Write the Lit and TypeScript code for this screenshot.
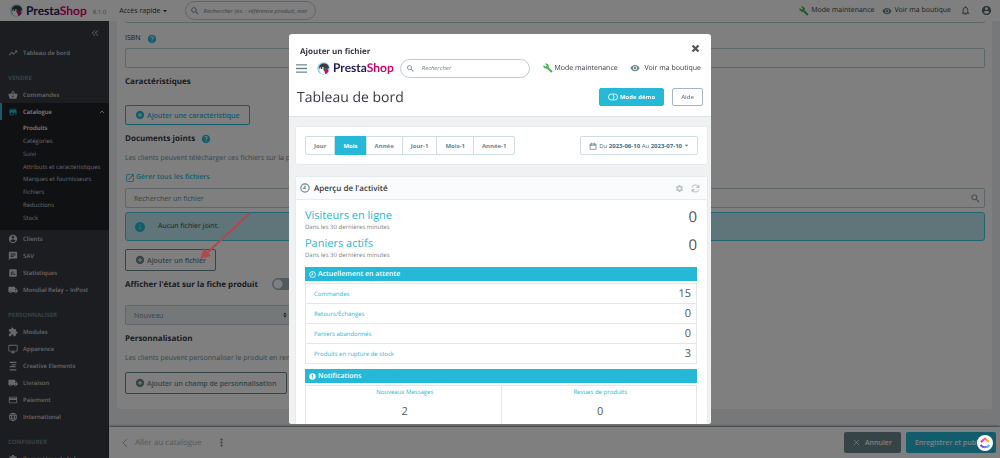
import { LitElement, html, css, svg } from "lit";
import { customElement, property } from "lit/decorators.js";

const PATHS: Record<string, string> = {
  trend: "M16 6l2.29 2.29-4.88 4.88-4-4L2 16.59 3.41 18l6-6 4 4 6.3-6.29L22 12V6z",
  basket:
    "M17.21 9l-4.38-6.56c-.19-.28-.51-.42-.83-.42-.32 0-.64.14-.83.43L6.79 9H2c-.55 0-1 .45-1 1 0 .09.01.18.04.27l2.54 9.27c.23.84 1 1.46 1.92 1.46h13c.92 0 1.69-.62 1.93-1.46l2.54-9.27L23 10c0-.55-.45-1-1-1h-4.79zM9 9l3-4.4L15 9H9zm3 8c-1.1 0-2-.9-2-2s.9-2 2-2 2 .9 2 2-.9 2-2 2z",
  store: "M20 4H4v2h16V4zm1 10v-2l-1-5H4l-1 5v2h1v6h10v-6h4v6h2v-6h1zm-9 4H6v-4h6v4z",
  account:
    "M12 2C6.48 2 2 6.48 2 12s4.48 10 10 10 10-4.48 10-10S17.52 2 12 2zm0 3c1.66 0 3 1.34 3 3s-1.34 3-3 3-3-1.34-3-3 1.34-3 3-3zm0 14.2c-2.5 0-4.71-1.28-6-3.22.03-1.99 4-3.08 6-3.08 1.99 0 5.97 1.09 6 3.08-1.29 1.94-3.5 3.22-6 3.22z",
  chat: "M20 2H4c-1.1 0-1.99.9-1.99 2L2 22l4-4h14c1.1 0 2-.9 2-2V4c0-1.1-.9-2-2-2zM6 9h12v2H6V9zm8 5H6v-2h8v2zm4-6H6V6h12v2z",
  stats:
    "M19 3H5c-1.1 0-2 .9-2 2v14c0 1.1.9 2 2 2h14c1.1 0 2-.9 2-2V5c0-1.1-.9-2-2-2zM9 17H7v-7h2v7zm4 0h-2V7h2v10zm4 0h-2v-4h2v4z",
  truck:
    "M20 8h-3V4H3c-1.1 0-2 .9-2 2v11h2c0 1.66 1.34 3 3 3s3-1.34 3-3h6c0 1.66 1.34 3 3 3s3-1.34 3-3h2v-5l-3-4zM6 18.5c-.83 0-1.5-.67-1.5-1.5s.67-1.5 1.5-1.5 1.5.67 1.5 1.5-.67 1.5-1.5 1.5zm13.5-9l1.96 2.5H17V9.5h2.5zm-1.5 9c-.83 0-1.5-.67-1.5-1.5s.67-1.5 1.5-1.5 1.5.67 1.5 1.5-.67 1.5-1.5 1.5z",
  puzzle:
    "M20.5 11H19V7c0-1.1-.9-2-2-2h-4V3.5C13 2.12 11.88 1 10.5 1S8 2.12 8 3.5V5H4c-1.1 0-1.99.9-1.99 2v3.8H3.5c1.49 0 2.7 1.21 2.7 2.7s-1.21 2.7-2.7 2.7H2V20c0 1.1.9 2 2 2h3.8v-1.5c0-1.49 1.21-2.7 2.7-2.7 1.49 0 2.7 1.21 2.7 2.7V22H17c1.1 0 2-.9 2-2v-4h1.5c1.38 0 2.5-1.12 2.5-2.5S21.88 11 20.5 11z",
  screen:
    "M21 2H3c-1.1 0-2 .9-2 2v12c0 1.1.9 2 2 2h7v2H8v2h8v-2h-2v-2h7c1.1 0 2-.9 2-2V4c0-1.1-.9-2-2-2zm0 14H3V4h18v12z",
  lines: "M4 2h16v3H4zM8 8h12v2H8zM4 12h14v3H4zM4 20h16v3H4z",
  card: "M20 4H4c-1.11 0-1.99.89-1.99 2L2 18c0 1.11.89 2 2 2h16c1.11 0 2-.89 2-2V6c0-1.11-.89-2-2-2zm0 14H4v-6h16v6zm0-10H4V6h16v2z",
  globe:
    "M11.99 2C6.47 2 2 6.48 2 12s4.47 10 9.99 10C17.52 22 22 17.52 22 12S17.52 2 11.99 2zm6.93 6h-2.95c-.32-1.25-.78-2.45-1.38-3.56 1.84.63 3.37 1.91 4.33 3.56zM12 4.04c.83 1.2 1.48 2.53 1.91 3.96h-3.82c.43-1.43 1.08-2.76 1.91-3.96zM4.26 14C4.1 13.36 4 12.69 4 12s.1-1.36.26-2h3.38c-.08.66-.14 1.32-.14 2 0 .68.06 1.34.14 2H4.26zm.82 2h2.95c.32 1.25.78 2.45 1.38 3.56-1.84-.63-3.37-1.9-4.33-3.56zm2.95-8H5.08c.96-1.66 2.49-2.93 4.33-3.56C8.81 5.55 8.35 6.75 8.03 8zM12 19.96c-.83-1.2-1.48-2.53-1.91-3.96h3.82c-.43 1.43-1.08 2.76-1.91 3.96zM14.34 14H9.66c-.09-.66-.16-1.32-.16-2 0-.68.07-1.35.16-2h4.68c.09.65.16 1.32.16 2 0 .68-.07 1.34-.16 2zm.25 5.56c.6-1.11 1.06-2.31 1.38-3.56h2.95c-.96 1.65-2.49 2.93-4.33 3.56zM16.36 14c.08-.66.14-1.32.14-2 0-.68-.06-1.34-.14-2h3.38c.16.64.26 1.31.26 2s-.1 1.36-.26 2h-3.38z",
  help: "M12 2C6.48 2 2 6.48 2 12s4.48 10 10 10 10-4.48 10-10S17.52 2 12 2zm1 17h-2v-2h2v2zm2.07-7.75l-.9.92C13.45 12.9 13 13.5 13 15h-2v-.5c0-1.1.45-2.1 1.17-2.83l1.24-1.26c.37-.36.59-.86.59-1.41 0-1.1-.9-2-2-2s-2 .9-2 2H8c0-2.21 1.79-4 4-4s4 1.79 4 4c0 .88-.36 1.68-.93 2.25z",
  add: "M12 2C6.48 2 2 6.48 2 12s4.48 10 10 10 10-4.48 10-10S17.52 2 12 2zm5 11h-4v4h-2v-4H7v-2h4V7h2v4h4v2z",
  info: "M12 2C6.48 2 2 6.48 2 12s4.48 10 10 10 10-4.48 10-10S17.52 2 12 2zm1 15h-2v-6h2v6zm0-8h-2V7h2v2z",
  alert: "M12 1a11 11 0 1 0 0 22 11 11 0 0 0 0-22zm2 18h-4v-4h4zm0-6h-4V5h4z",
  external:
    "M19 19H5V5h7V3H5c-1.11 0-2 .9-2 2v14c0 1.1.89 2 2 2h14c1.1 0 2-.9 2-2v-7h-2v7zM14 3v2h3.59l-9.83 9.83 1.41 1.41L19 6.41V10h2V3h-7z",
  search:
    "M15.5 14h-.79l-.28-.27C15.41 12.59 16 11.11 16 9.5 16 5.91 13.09 3 9.5 3S3 5.91 3 9.5 5.91 16 9.5 16c1.61 0 3.09-.59 4.23-1.57l.27.28v.79l5 4.99L20.49 19l-4.99-5zm-6 0C7.01 14 5 11.99 5 9.5S7.01 5 9.5 5 14 7.01 14 9.5 11.99 14 9.5 14z",
  wrench:
    "M22.7 19l-9.1-9.1c.9-2.3.4-5-1.5-6.9-2-2-5-2.4-7.4-1.3L9 6 6 9 1.6 4.7C.4 7.1.9 10.1 2.9 12.1c1.9 1.9 4.6 2.4 6.9 1.5l9.1 9.1c.4.4 1 .4 1.4 0l2.3-2.3c.5-.4.5-1.1.1-1.4z",
  eye: "M12 4.5C7 4.5 2.73 7.61 1 12c1.73 4.39 6 7.5 11 7.5s9.27-3.11 11-7.5c-1.73-4.39-6-7.5-11-7.5zM12 17c-2.76 0-5-2.24-5-5s2.24-5 5-5 5 2.24 5 5-2.24 5-5 5zm0-8c-1.66 0-3 1.34-3 3s1.34 3 3 3 3-1.34 3-3-1.34-3-3-3z",
  bell: "M12 22c1.1 0 2-.9 2-2h-4c0 1.1.89 2 2 2zm6-6v-5c0-3.07-1.64-5.64-4.5-6.32V4c0-.83-.67-1.5-1.5-1.5s-1.5.67-1.5 1.5v.68C7.63 5.36 6 7.92 6 11v5l-2 2v1h16v-1l-2-2zm-2 1H8v-6c0-2.48 1.51-4.5 4-4.5s4 2.02 4 4.5v6z",
  gear: "M19.14 12.94c.04-.3.06-.61.06-.94s-.02-.64-.07-.94l2.03-1.58a.49.49 0 0 0 .12-.61l-1.92-3.32a.49.49 0 0 0-.59-.22l-2.39.96a7 7 0 0 0-1.62-.94l-.36-2.54a.48.48 0 0 0-.48-.41h-3.84a.48.48 0 0 0-.47.41l-.36 2.54c-.59.24-1.13.57-1.62.94l-2.39-.96a.48.48 0 0 0-.59.22L2.74 8.87a.48.48 0 0 0 .12.61l2.03 1.58a7 7 0 0 0 0 1.88l-2.03 1.58a.49.49 0 0 0-.12.61l1.92 3.32c.12.22.37.29.59.22l2.39-.96c.5.38 1.03.7 1.62.94l.36 2.54c.05.24.24.41.48.41h3.84c.24 0 .44-.17.47-.41l.36-2.54a7 7 0 0 0 1.62-.94l2.39.96c.22.08.47 0 .59-.22l1.92-3.32a.48.48 0 0 0-.12-.61zM12 15.6a3.6 3.6 0 1 1 0-7.2 3.6 3.6 0 0 1 0 7.2z",
  dots: "M12 1a3 3 0 1 0 0 6 3 3 0 0 0 0-6zm0 8a3 3 0 1 0 0 6 3 3 0 0 0 0-6zm0 8a3 3 0 1 0 0 6 3 3 0 0 0 0-6z",
  caret: "M4 8h16l-8 9z",
  updown: "M5 10l7-8 7 8zM5 14l7 8 7-8z",
};

const STROKES: Record<string, [string, number]> = {
  collapse: ["M12 4l-8 8 8 8M21 4l-8 8 8 8", 2.8],
  up: ["M4 16l8-8 8 8", 3],
  left: ["M17 2L7 12l10 10", 2.4],
  cross: ["M3 3l18 18M21 3L3 21", 2.6],
  close: ["M4 4l16 16M20 4L4 20", 6],
  menu: ["M0 4h24M0 12h24M0 20h24", 3],
  clock: ["M12 2a10 10 0 1 0 0 20 10 10 0 0 0 0-20M12 6v7H7", 2.8],
  calendar: ["M3 6h18v16H3zM3 10h18M8 2v6M16 2v6", 2],
  sync: ["M3 10a9 9 0 0 1 16-4l2 3M21 2v7h-7M21 14a9 9 0 0 1-16 4l-2-3M3 22v-7h7", 2.8],
  toggle: ["M8 5h8a7 7 0 0 1 0 14H8A7 7 0 0 1 8 5M12 6a9 9 0 0 1 0 12", 2],
};

/** Square monochrome icon that takes the colour of its text. */
@customElement("ps-icon")
class PsIcon extends LitElement {
  @property() name = "";
  @property({ type: Number }) size = 10;

  static styles = css`
    :host {
      display: inline-flex;
      flex: none;
    }
    svg {
      display: block;
    }
  `;

  render() {
    const stroke = STROKES[this.name];
    return html`<svg width=${this.size} height=${this.size} viewBox="0 0 24 24" aria-hidden="true">
      ${stroke
        ? svg`<path d=${stroke[0]} fill="none" stroke="currentColor" stroke-width=${stroke[1]}></path>`
        : svg`<path d=${PATHS[this.name]} fill="currentColor"></path>`}
    </svg>`;
  }
}

/** PrestaShop brand: puffin badge and two-tone word mark. */
@customElement("ps-logo")
class PsLogo extends LitElement {
  static styles = css`
    :host {
      display: inline-flex;
      align-items: center;
      gap: 3px;
      flex: none;
      font: 700 12px/14px Lato, sans-serif;
      color: #251b5b;
    }
    .pink {
      color: #df0067;
    }
    svg {
      display: block;
    }
  `;

  render() {
    return html`<svg width="13" height="13" viewBox="0 0 26 26" aria-hidden="true">
        <circle cx="13" cy="13" r="12.5" fill="#8fd4ea"></circle>
        <path d="M4 14C3 7 8 3 14 3c6 0 10 4 10 9l-4 2z" fill="#3b3a45"></path>
        <path d="M5 12c3-3 8-3 10 1l1 11C9 26 4 21 5 12z" fill="#fff"></path>
        <circle cx="9" cy="12" r="2" fill="#3b3a45"></circle>
        <path d="M13 12c4-2 8 0 9 4-3 0-5 1-7 3-2-2-3-5-2-7z" fill="#5a4a58"></path>
        <path d="M16 17c3-2 6-2 7 0-1 4-3 6-6 7-2-2-2-5-1-7z" fill="#df0067"></path>
      </svg>
      <span>Presta<span class="pink">Shop</span></span>`;
  }
}

type Item = [icon: string, label: string];

const SELL: Item[] = [
  ["account", "Clients"],
  ["chat", "SAV"],
  ["stats", "Statistiques"],
  ["truck", "Mondial Relay – InPost"],
];
const CUSTOMISE: Item[] = [
  ["puzzle", "Modules"],
  ["screen", "Apparence"],
  ["lines", "Creative Elements"],
  ["truck", "Livraison"],
  ["card", "Paiement"],
  ["globe", "International"],
];
const CATALOGUE = [
  "Produits",
  "Catégories",
  "Suivi",
  "Attributs et caractéristiques",
  "Marques et fournisseurs",
  "Fichiers",
  "Réductions",
  "Stock",
];

@customElement("ps-sidebar")
class PsSidebar extends LitElement {
  static styles = css`
    :host {
      display: block;
      background: #363a41;
      color: #d0d0d0;
      font-size: 6px;
      overflow: hidden;
    }
    ul {
      list-style: none;
      margin: 0;
      padding: 0;
    }
    a {
      color: inherit;
      text-decoration: none;
    }
    .fold {
      display: flex;
      justify-content: flex-end;
      align-items: center;
      width: 100%;
      height: 23px;
      padding: 0 10px 0 0;
      border: 0;
      background: none;
      color: #d0d4d8;
    }
    .item {
      display: flex;
      align-items: center;
      gap: 5px;
      height: 17px;
      padding-left: 8px;
      font-weight: 600;
      white-space: nowrap;
    }
    .open {
      background: #202226;
      color: #fff;
      padding-left: 6px;
      padding-right: 4px;
      border-left: 2px solid #25b9d7;
    }
    .open ps-icon:first-child {
      color: #25b9d7;
    }
    .open span {
      flex: 1;
    }
    .heading {
      margin: 9px 0 0;
      padding-left: 8px;
      font-size: 6px;
      line-height: 16px;
      font-weight: 700;
      color: #6c868e;
      text-transform: uppercase;
    }
    .sub {
      display: grid;
      grid-auto-rows: 1fr;
      align-items: center;
      height: 110px;
      box-sizing: border-box;
      padding: 2px 0 6px 23px;
      background: #202226;
      white-space: nowrap;
    }
    .current {
      color: #fff;
      font-weight: 600;
    }
  `;

  private item([icon, label]: Item) {
    return html`<li>
      <a class="item" href="#"><ps-icon name=${icon} size="10"></ps-icon><span>${label}</span></a>
    </li>`;
  }

  render() {
    return html`<nav>
      <button class="fold" aria-label="Réduire le menu"><ps-icon name="collapse" size="8"></ps-icon></button>
      <ul>
        ${this.item(["trend", "Tableau de bord"])}
      </ul>
      <h2 class="heading">Vendre</h2>
      <ul>
        ${this.item(["basket", "Commandes"])}
        <li>
          <a class="item open" href="#">
            <ps-icon name="store" size="10"></ps-icon><span>Catalogue</span><ps-icon name="up" size="6"></ps-icon>
          </a>
          <ul class="sub">
            ${CATALOGUE.map((t, i) => html`<li><a class=${i ? "" : "current"} href="#">${t}</a></li>`)}
          </ul>
        </li>
        ${SELL.map((i) => this.item(i))}
      </ul>
      <h2 class="heading">Personnaliser</h2>
      <ul>
        ${CUSTOMISE.map((i) => this.item(i))}
      </ul>
      <h2 class="heading">Configurer</h2>
      <ul>
        ${this.item(["gear", "Paramètres de la b…"])}
      </ul>
    </nav>`;
  }
}

/** Product form underneath the dialog. */
@customElement("ps-product-form")
class PsProductForm extends LitElement {
  static styles = css`
    :host {
      display: block;
      overflow: hidden;
      background: #eff1f2;
      color: #363a41;
      font-size: 7px;
    }
    .card {
      display: flex;
      flex-direction: column;
      align-items: stretch;
      margin: -18px 8px 0;
      padding: 0 7px 15px 8px;
      background: #fff;
      border-radius: 3px;
    }
    input,
    select {
      display: block;
      width: 100%;
      height: 20px;
      box-sizing: border-box;
      margin: 0;
      padding: 0 8px;
      border: 1px solid #bbcdd2;
      border-radius: 2px;
      background: #fff;
      color: #6c868e;
      font: inherit;
      appearance: none;
    }
    input::placeholder {
      color: #6c868e;
      opacity: 1;
    }
    .label {
      display: flex;
      align-items: center;
      gap: 6px;
      margin: 11px 0 4px;
      line-height: 10px;
    }
    .help {
      color: #25b9d7;
    }
    h3 {
      display: flex;
      align-items: center;
      gap: 6px;
      margin: 8px 0 0;
      font-size: 8px;
      line-height: 12px;
      font-weight: 700;
    }
    p {
      margin: 9px 0 8px;
      line-height: 10px;
      color: #6c868e;
      white-space: nowrap;
    }
    .btn {
      display: flex;
      align-items: center;
      align-self: flex-start;
      gap: 2px;
      height: 22px;
      padding: 0 9px;
      border: 1px solid #6c868e;
      border-radius: 2px;
      background: #fff;
      color: #6c868e;
      font: 600 7px "Open Sans", sans-serif;
      white-space: nowrap;
    }
    .blue {
      height: 20px;
      margin-top: 17px;
      border-color: #25b9d7;
      color: #25b9d7;
    }
    .link {
      display: flex;
      align-items: center;
      align-self: flex-start;
      gap: 1px;
      margin-bottom: 4px;
      line-height: 12px;
      font-weight: 600;
      color: #25b9d7;
      text-decoration: none;
    }
    .field {
      position: relative;
    }
    .field ps-icon {
      position: absolute;
      right: 4px;
      top: 5px;
      color: #6c868e;
    }
    .alert {
      display: flex;
      align-items: center;
      gap: 12px;
      height: 29px;
      box-sizing: border-box;
      margin: 4px 0 8px;
      padding: 0 8px;
      border: 1px solid #4ac7e0;
      border-radius: 3px;
      background: #beeaf3;
    }
    .alert > ps-icon {
      color: #25b9d7;
    }
    .switch {
      display: flex;
      align-items: center;
      gap: 14px;
      margin: 7px 0 15px;
      height: 12px;
      font-size: 8px;
      font-weight: 700;
    }
    .switch input {
      width: 22px;
      height: 12px;
      padding: 0;
      border-radius: 6px;
      border-color: #a3b5ba;
      background: radial-gradient(circle at 5px 5px, #fff 4px, #a3b5ba 5px);
    }
    .state {
      position: relative;
      width: 168px;
    }
    .state select {
      background: #eaf1f3;
    }
    .state ps-icon {
      position: absolute;
      right: 5px;
      top: 7px;
    }
  `;

  render() {
    return html`<div class="card">
      <input aria-label="MPN" />
      <label class="label" for="isbn">ISBN <ps-icon class="help" name="help" size="10"></ps-icon></label>
      <input id="isbn" />
      <h3>Caractéristiques</h3>
      <button class="btn blue"><ps-icon name="add" size="10"></ps-icon>Ajouter une caractéristique</button>
      <h3>Documents joints <ps-icon class="help" name="help" size="10"></ps-icon></h3>
      <p>Les clients peuvent télécharger ces fichiers sur la page.</p>
      <a class="link" href="#"><ps-icon name="external" size="10"></ps-icon>Gérer tous les fichiers</a>
      <div class="field">
        <input type="text" aria-label="Rechercher un fichier" placeholder="Rechercher un fichier" />
        <ps-icon name="search" size="11"></ps-icon>
      </div>
      <div class="alert"><ps-icon name="info" size="12"></ps-icon>Aucun fichier joint.</div>
      <button class="btn"><ps-icon name="add" size="10"></ps-icon>Ajouter un fichier</button>
      <label class="switch">Afficher l'état sur la fiche produit <input type="checkbox" role="switch" /></label>
      <div class="state">
        <select aria-label="État">
          <option>Nouveau</option>
        </select>
        <ps-icon name="updown" size="6"></ps-icon>
      </div>
      <h3>Personnalisation</h3>
      <p>Les clients peuvent personnaliser le produit en remplissant des champs.</p>
      <button class="btn"><ps-icon name="add" size="10"></ps-icon>Ajouter un champ de personnalisation</button>
    </div>`;
  }
}

/** Dialog holding the dashboard. */
@customElement("ps-dialog")
class PsDialog extends LitElement {
  static styles = css`
    :host {
      display: flex;
      flex-direction: column;
      overflow: hidden;
      border-radius: 3px;
      background: #fff;
      color: #363a41;
      font-size: 7px;
    }
    button,
    input {
      font: inherit;
      color: inherit;
    }
    a {
      color: inherit;
      text-decoration: none;
    }
    .top {
      display: flex;
      justify-content: space-between;
      align-items: center;
      height: 24px;
      padding: 0 11px;
    }
    .top h2 {
      margin: 11px 0 0;
      font-size: 8px;
      font-weight: 700;
    }
    .bare {
      display: flex;
      padding: 0;
      border: 0;
      background: none;
      color: #6c868e;
    }
    .top .bare {
      margin-top: 4px;
      color: #555;
    }
    .bar {
      display: flex;
      align-items: center;
      height: 20px;
      padding: 0 10px 0 7px;
    }
    .bar ps-logo {
      margin: 0 6px 0 10px;
    }
    .search {
      display: flex;
      align-items: center;
      gap: 7px;
      width: 130px;
      height: 19px;
      box-sizing: border-box;
      padding: 0 5px;
      border: 1px solid #bbcdd2;
      border-radius: 10px;
      color: #6c868e;
      font-size: 6px;
    }
    .search input {
      flex: 1;
      min-width: 0;
      border: 0;
      padding: 0;
      background: none;
      font-style: italic;
      outline: 0;
    }
    .search input::placeholder {
      color: #6c868e;
      opacity: 1;
    }
    .quick {
      display: flex;
      align-items: center;
      gap: 2px;
      margin-left: auto;
    }
    .quick + .quick {
      gap: 4px;
    }
    .green {
      color: #4bb55b;
    }
    .slate {
      color: #6c868e;
    }
    .title {
      display: flex;
      align-items: center;
      gap: 8px;
      height: 38px;
      padding: 0 8px;
      border-bottom: 1px solid #dfe4e6;
    }
    .title h1 {
      flex: 1;
      margin: 0;
      font-size: 14px;
      font-weight: 400;
    }
    .btn {
      display: flex;
      align-items: center;
      gap: 2px;
      height: 18px;
      padding: 0 8px;
      border: 1px solid #a3b8be;
      border-radius: 2px;
      background: #fff;
      color: #6c868e;
      font-size: 6px;
      font-weight: 600;
    }
    .primary {
      border-color: #25b9d7;
      background: #25b9d7;
      color: #fff;
      font-weight: 700;
    }
    .body {
      flex: 1;
      display: flex;
      flex-direction: column;
      gap: 11px;
      min-height: 0;
      overflow: hidden;
      padding: 9px 3px 0 6px;
      background: #eff1f2;
    }
    .panel {
      flex: none;
      border: 1px solid #e6ecee;
      border-radius: 3px;
      background: #fff;
    }
    .filters {
      display: flex;
      justify-content: space-between;
      padding: 9px;
    }
    .tabs {
      display: flex;
      height: 19px;
      box-sizing: border-box;
      border: 1px solid #cfdde0;
      border-radius: 2px;
    }
    .tabs button {
      padding: 0 8px;
      border: 0;
      border-left: 1px solid #cfdde0;
      background: none;
      color: #6c868e;
      font-size: 6px;
      font-weight: 700;
    }
    .tabs button:first-child {
      border-left: 0;
    }
    .tabs .on {
      margin: -1px 0;
      background: #25b9d7;
      color: #fff;
    }
    .date {
      display: flex;
      align-items: center;
      gap: 2px;
      height: 19px;
      padding: 0 8px;
      border: 1px solid #cfdde0;
      border-radius: 2px;
      background: none;
      color: #576c72;
      font-size: 6px;
      white-space: nowrap;
    }
    .date b {
      color: #31708f;
    }
    .head {
      display: flex;
      align-items: center;
      gap: 4px;
      height: 22px;
      padding: 0 7px 0 4px;
      border-bottom: 1px solid #e6ecee;
      background: #fafbfc;
    }
    .head h2 {
      flex: 1;
      margin: 0;
      font-size: 8px;
      font-weight: 600;
    }
    .head .bare {
      margin-left: 3px;
      color: #bcc3c6;
    }
    .inner {
      padding: 8px 10px 0 9px;
    }
    .kpi {
      display: flex;
      justify-content: space-between;
      height: 28px;
      color: #555;
    }
    .kpi a {
      display: block;
      font-size: 11px;
      line-height: 15px;
      color: #25b9d7;
    }
    .kpi small {
      display: block;
      font-size: 6px;
      line-height: 9px;
      color: #808080;
    }
    .kpi strong {
      font-size: 15px;
      line-height: 18px;
      font-weight: 400;
    }
    .band {
      display: flex;
      align-items: center;
      gap: 2px;
      height: 14px;
      margin: 3px 0 2px;
      padding: 0 4px;
      background: #25b9d7;
      color: #fff;
      font-size: 7px;
      font-weight: 600;
    }
    table {
      width: 100%;
      border-collapse: collapse;
      color: #555;
    }
    th,
    td {
      border: 1px solid #e6e6e6;
      padding: 0 5px 0 8px;
    }
    .rows th {
      height: 19px;
      border-right: 0;
      text-align: left;
      font-size: 6px;
      font-weight: 400;
    }
    .rows td {
      border-left: 0;
      text-align: right;
      font-size: 11px;
      line-height: 18px;
    }
    .rows a,
    .split a {
      color: #25b9d7;
    }
    .rows + .band {
      margin-top: 5px;
    }
    .split {
      table-layout: fixed;
      text-align: center;
    }
    .split th {
      height: 12px;
      border-bottom: 0;
      font-size: 6px;
      font-weight: 400;
    }
    .split td {
      height: 24px;
      padding-top: 2px;
      border-top: 0;
      font-size: 11px;
      line-height: 14px;
    }
  `;

  render() {
    return html`<div class="top">
        <h2>Ajouter un fichier</h2>
        <button class="bare" aria-label="Fermer"><ps-icon name="close" size="9"></ps-icon></button>
      </div>
      <div class="bar">
        <button class="bare" aria-label="Menu"><ps-icon name="menu" size="11"></ps-icon></button>
        <ps-logo></ps-logo>
        <label class="search">
          <ps-icon name="search" size="9"></ps-icon>
          <input type="search" placeholder="Rechercher" aria-label="Rechercher" />
        </label>
        <a class="quick" href="#"><ps-icon class="green" name="wrench" size="10"></ps-icon>Mode maintenance</a>
        <a class="quick" href="#"><ps-icon class="slate" name="eye" size="10"></ps-icon>Voir ma boutique</a>
      </div>
      <div class="title">
        <h1>Tableau de bord</h1>
        <button class="btn primary"><ps-icon name="toggle" size="10"></ps-icon>Mode démo</button>
        <button class="btn">Aide</button>
      </div>
      <div class="body">
        <section class="panel filters">
          <div class="tabs">
            ${["Jour", "Mois", "Année", "Jour-1", "Mois-1", "Année-1"].map(
              (t) => html`<button class=${t === "Mois" ? "on" : ""}>${t}</button>`
            )}
          </div>
          <button class="date">
            <ps-icon name="calendar" size="8"></ps-icon>
            <span>Du <b>2023-06-10</b> Au <b>2023-07-10</b></span>
            <ps-icon name="caret" size="5"></ps-icon>
          </button>
        </section>
        <section class="panel">
          <header class="head">
            <ps-icon class="slate" name="clock" size="10"></ps-icon>
            <h2>Aperçu de l'activité</h2>
            <button class="bare" aria-label="Configurer"><ps-icon name="gear" size="9"></ps-icon></button>
            <button class="bare" aria-label="Rafraîchir"><ps-icon name="sync" size="9"></ps-icon></button>
          </header>
          <div class="inner">
            ${["Visiteurs en ligne", "Paniers actifs"].map(
              (t) => html`<div class="kpi">
                <div><a href="#">${t}</a><small>Dans les 30 dernières minutes</small></div>
                <strong>0</strong>
              </div>`
            )}
            <div class="band"><ps-icon name="clock" size="7"></ps-icon>Actuellement en attente</div>
            <table class="rows">
              ${[
                ["Commandes", 15],
                ["Retours/Échanges", 0],
                ["Paniers abandonnés", 0],
                ["Produits en rupture de stock", 3],
              ].map(([t, n]) => html`<tr><th scope="row"><a href="#">${t}</a></th><td>${n}</td></tr>`)}
            </table>
            <div class="band"><ps-icon name="alert" size="7"></ps-icon>Notifications</div>
            <table class="split">
              <tr>
                <th scope="col"><a href="#">Nouveaux Messages</a></th>
                <th scope="col"><a href="#">Revues de produits</a></th>
              </tr>
              <tr>
                <td>2</td>
                <td>0</td>
              </tr>
            </table>
          </div>
        </section>
      </div>`;
  }
}

@customElement("app-root")
class AppRoot extends LitElement {
  static styles = css`
    :host {
      display: grid;
      grid-template: auto minmax(0, 1fr) / 109px minmax(0, 1fr);
      height: 100vh;
      overflow: hidden;
      font-family: "Open Sans", "Noto Sans", sans-serif;
      font-size: 7px;
      text-rendering: geometricPrecision;
      color: #363a41;
      background: #fff;
    }
    a {
      color: inherit;
      text-decoration: none;
    }
    header {
      grid-column: 1 / -1;
      display: flex;
      align-items: center;
      height: 21px;
      padding: 0 8px 0 10px;
      background: #fff;
    }
    .version {
      margin: 2px 13px 0 6px;
      font-size: 6px;
      color: #6c868e;
    }
    .menu {
      display: flex;
      align-items: center;
      gap: 2px;
      margin-right: 17px;
      padding: 0;
      border: 0;
      background: none;
      color: inherit;
      font: inherit;
    }
    .search {
      display: flex;
      align-items: center;
      gap: 3px;
      width: 131px;
      height: 19px;
      box-sizing: border-box;
      margin-right: auto;
      padding: 0 8px 0 4px;
      border: 1px solid #bbcdd2;
      border-radius: 10px;
      color: #6c868e;
      font-size: 6px;
    }
    .search input {
      flex: 1;
      min-width: 0;
      border: 0;
      padding: 0;
      background: none;
      font: inherit;
      font-style: italic;
    }
    .search input::placeholder {
      color: #6c868e;
      opacity: 1;
    }
    .quick {
      display: flex;
      align-items: center;
      gap: 2px;
      margin-right: 8px;
    }
    .green {
      color: #4bb55b;
    }
    .slate {
      color: #6c868e;
    }
    .round {
      display: flex;
      margin-left: 1px;
      margin-right: 9px;
      padding: 0;
      border: 0;
      background: none;
      color: #576c72;
    }
    .round:last-child {
      margin-right: 0;
    }
    .work {
      display: flex;
      flex-direction: column;
      min-height: 0;
    }
    ps-product-form {
      flex: 1;
      min-height: 0;
    }
    footer {
      display: flex;
      align-items: center;
      gap: 5px;
      height: 31px;
      padding: 0 4px 0 11px;
      background: #fff;
      box-shadow: 0 -1px 2px rgba(0, 0, 0, 0.5);
      z-index: 1;
      font-size: 8px;
      color: #6c868e;
    }
    .back {
      display: flex;
      align-items: center;
      gap: 5px;
      margin-right: 10px;
      color: #a3b5ba;
    }
    .more {
      margin-right: auto;
      padding: 0;
      border: 0;
      background: none;
      color: #6c868e;
    }
    .act {
      display: flex;
      align-items: center;
      gap: 5px;
      height: 21px;
      padding: 0 9px;
      border: 0;
      border-radius: 2px;
      background: #6c868e;
      color: #fff;
      font: 600 7px "Open Sans", sans-serif;
      white-space: nowrap;
    }
    .save {
      background: #25b9d7;
    }
    .backdrop {
      position: fixed;
      inset: 0;
      z-index: 2;
      display: flex;
      justify-content: center;
      padding: 34px;
      background: rgba(0, 0, 0, 0.5);
    }
    ps-dialog {
      width: 422px;
    }
    .arrow {
      position: fixed;
      left: 198px;
      top: 211px;
      z-index: 3;
    }
    .badge {
      position: fixed;
      right: 7px;
      bottom: 7px;
      z-index: 3;
      display: block;
    }
  `;

  render() {
    return html`<header>
        <ps-logo></ps-logo>
        <span class="version">8.1.0</span>
        <button class="menu">Accès rapide <ps-icon name="caret" size="6"></ps-icon></button>
        <label class="search">
          <ps-icon name="search" size="10"></ps-icon>
          <input
            type="text"
            aria-label="Rechercher"
            placeholder="Rechercher (ex. : référence produit, nom du client)"
          />
        </label>
        <a class="quick" href="#"><ps-icon class="green" name="wrench" size="10"></ps-icon>Mode maintenance</a>
        <a class="quick" href="#"><ps-icon class="slate" name="eye" size="10"></ps-icon>Voir ma boutique</a>
        <button class="round" aria-label="Notifications"><ps-icon name="bell" size="11"></ps-icon></button>
        <button class="round" aria-label="Compte"><ps-icon name="account" size="11"></ps-icon></button>
      </header>
      <ps-sidebar></ps-sidebar>
      <div class="work">
        <ps-product-form></ps-product-form>
        <footer>
          <a class="back" href="#"><ps-icon name="left" size="10"></ps-icon>Aller au catalogue</a>
          <button class="more" aria-label="Plus d'actions"><ps-icon name="dots" size="9"></ps-icon></button>
          <button class="act"><ps-icon name="cross" size="7"></ps-icon>Annuler</button>
          <button class="act save">Enregistrer et publier</button>
        </footer>
      </div>
      <div class="backdrop">
        <ps-dialog role="dialog" aria-modal="true" aria-label="Ajouter un fichier"></ps-dialog>
      </div>
      <svg class="arrow" width="54" height="50" viewBox="0 0 54 50" aria-hidden="true">
        <path d="M52 2L9 42" stroke="#b2474c" stroke-width="2" fill="none"></path>
        <path d="M2 48L6 37l7 8z" fill="#b2474c"></path>
      </svg>
      <svg class="badge" width="16" height="16" viewBox="0 0 32 32" role="img" aria-label="ClickUp">
        <defs>
          <linearGradient id="warm"><stop stop-color="#ff02f0"></stop><stop offset="1" stop-color="#ffc800"></stop></linearGradient>
          <linearGradient id="cool"><stop stop-color="#8930fd"></stop><stop offset="1" stop-color="#49ccf9"></stop></linearGradient>
        </defs>
        <circle cx="16" cy="16" r="16" fill="#fff"></circle>
        <path d="M8 14l8-7 8 7" fill="none" stroke="url(#warm)" stroke-width="4"></path>
        <path d="M7 20c5 6 13 6 18 0" fill="none" stroke="url(#cool)" stroke-width="4"></path>
      </svg>`;
  }
}
